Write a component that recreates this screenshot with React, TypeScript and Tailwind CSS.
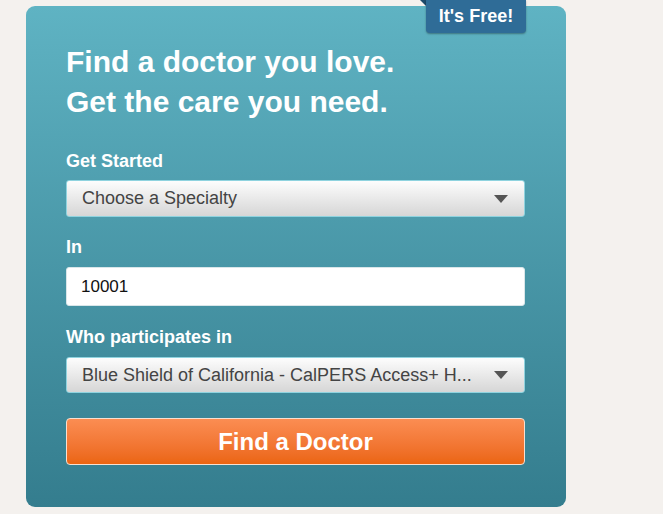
export default function App() {
  return (
    <div className="min-h-[514px] w-full bg-[#f4f1ee] font-['Liberation_Sans',Arial,sans-serif]">
      <div className="relative ml-[26px] w-[540px] pt-[6px]">
        <div className="h-[501px] rounded-[9px] bg-gradient-to-b from-[#5fb3c3] to-[#347d8e] pl-[40px] pr-[41px] pt-[36px]">
          <h1 className="text-[30px] font-bold leading-[40px] text-white">
            Find a doctor you love.
            <br />
            Get the care you need.
          </h1>

          <div className="mt-[29px] text-[18px] font-bold leading-[20px] text-white">Get Started</div>
          <div className="mt-[9px] flex h-[37px] items-center justify-between rounded-[3px] border border-[#8fd3df] bg-gradient-to-b from-[#fdfdfd] to-[#d6d6d6] pl-[15px] pr-[16px]">
            <span className="text-[18px] text-[#444]">Choose a Specialty</span>
            <Caret />
          </div>

          <div className="mt-[20px] text-[18px] font-bold leading-[20px] text-white">In</div>
          <div className="mt-[10px] flex h-[39px] items-center rounded-[3px] border border-[#d9e6e9] bg-white pl-[14px]">
            <span className="text-[17px] text-[#111]">10001</span>
          </div>

          <div className="mt-[21px] text-[18px] font-bold leading-[20px] text-white">Who participates in</div>
          <div className="mt-[10px] flex h-[36px] items-center justify-between rounded-[3px] border border-[#8fd3df] bg-gradient-to-b from-[#fdfdfd] to-[#d6d6d6] pl-[15px] pr-[16px]">
            <span className="text-[18px] text-[#444]">Blue Shield of California - CalPERS Access+ H...</span>
            <Caret />
          </div>

          <button className="mt-[25px] flex h-[47px] w-full items-center justify-center rounded-[4px] border border-[#f7e0d0] bg-gradient-to-b from-[#fb8d52] to-[#eb6510] text-[24px] font-bold text-white">
            Find a Doctor
          </button>
        </div>

        <div className="absolute left-[394px] top-0 flex">
          <div className="h-0 w-0 border-l-[6px] border-t-[6px] border-l-transparent border-t-[#1c4a6b]" />
          <div className="flex h-[33px] w-[100px] items-center justify-center rounded-b-[4px] bg-[#2f6c97] shadow-[0_1px_2px_rgba(0,0,0,0.35)] text-[18px] font-bold text-white">
            It's Free!
          </div>
        </div>
      </div>
    </div>
  );
}

function Caret() {
  return (
    <svg width="14" height="8" viewBox="0 0 14 8">
      <path d="M0 0 H14 L7 8 Z" fill="#555" />
    </svg>
  );
}
